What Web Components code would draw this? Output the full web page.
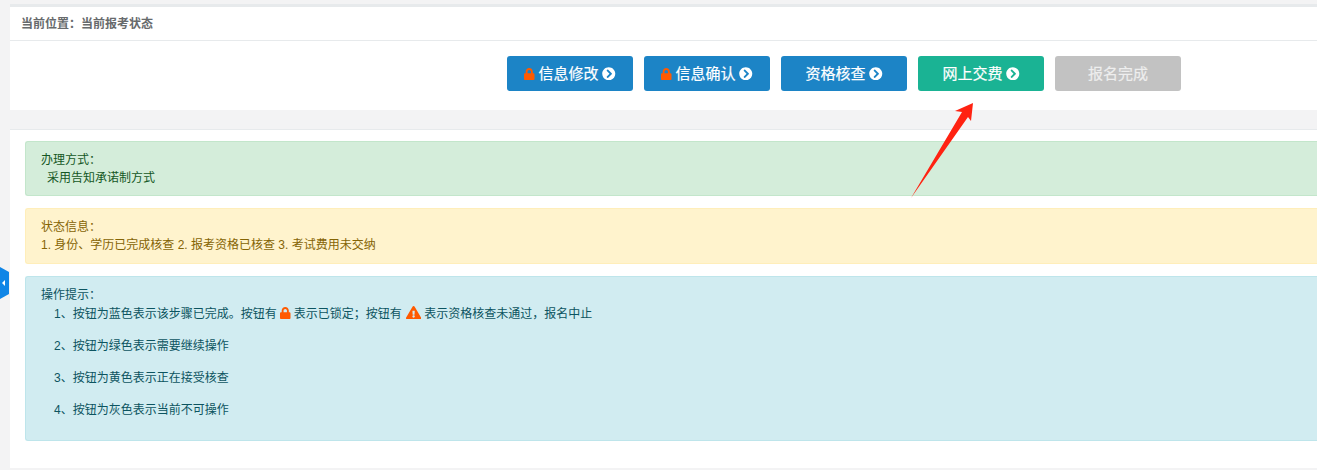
<!DOCTYPE html>
<html lang="zh">
<head>
<meta charset="utf-8">
<title>当前报考状态</title>
<style>
    html, body { margin: 0; height: 470px; overflow: hidden; background: #f3f3f4; }
    body {
        font-family: "Liberation Sans", "Noto Sans CJK SC", sans-serif;
        font-size: 12px;
        color: #676a6c;
    }
</style>
</head>
<body>
<app-page>
    <app-step-bar slot="steps">
        <app-step color="blue" locked>信息修改</app-step>
        <app-step color="blue" locked>信息确认</app-step>
        <app-step color="blue">资格核查</app-step>
        <app-step color="green">网上交费</app-step>
        <app-step color="grey">报名完成</app-step>
    </app-step-bar>

    <app-alert kind="success" style="padding-bottom:8px">
        <div>办理方式：</div>
        <div style="padding-left:6px">采用告知承诺制方式</div>
    </app-alert>
    <app-alert kind="warning">
        <div>状态信息：</div>
        <div>1. 身份、学历已完成核查 2. 报考资格已核查 3. 考试费用未交纳</div>
    </app-alert>
    <app-alert kind="info">
        <div>操作提示：</div>
        <app-tip first>1、按钮为蓝色表示该步骤已完成。按钮有 <app-icon name="lock" style="font-size:12px;color:#ff5a00"></app-icon> 表示已锁定；按钮有 <app-icon name="warn" style="font-size:13.5px;margin-left:.5px;color:#ff5a00"></app-icon> 表示资格核查未通过，报名中止</app-tip>
        <app-tip>2、按钮为绿色表示需要继续操作</app-tip>
        <app-tip>3、按钮为黄色表示正在接受核查</app-tip>
        <app-tip>4、按钮为灰色表示当前不可操作</app-tip>
    </app-alert>
</app-page>

<script>
const ICONS = {
    lock: ['0 0 448 512', 'M400 224h-24v-72C376 68.2 307.8 0 224 0S72 68.2 72 152v72H48c-26.5 0-48 21.5-48 48v192c0 26.5 21.5 48 48 48h352c26.5 0 48-21.5 48-48V272c0-26.5-21.5-48-48-48zm-104 0H152v-72c0-39.7 32.3-72 72-72s72 32.3 72 72v72z'],
    warn: ['0 0 576 512', 'M569.517 440.013C587.975 472.007 564.806 512 527.94 512H48.054c-36.937 0-59.999-40.055-41.577-71.987L246.423 23.985c18.467-32.009 64.72-31.951 83.154 0l239.94 416.028zM288 354c-25.405 0-46 20.595-46 46s20.595 46 46 46 46-20.595 46-46-20.595-46-46-46zm-43.673-165.346l7.418 136c.347 6.364 5.609 11.346 11.982 11.346h48.546c6.373 0 11.635-4.982 11.982-11.346l7.418-136c.375-6.874-5.098-12.654-11.982-12.654h-63.383c-6.884 0-12.356 5.78-11.981 12.654z'],
    next: ['0 0 512 512', 'M256 8c137 0 248 111 248 248S393 504 256 504 8 393 8 256 119 8 256 8zm113.9 231L234.4 103.5c-9.4-9.4-24.6-9.4-33.9 0l-17 17c-9.4 9.4-9.4 24.6 0 33.9L285.1 256 183.5 357.6c-9.4 9.4-9.4 24.6 0 33.9l17 17c9.4 9.4 24.6 9.4 33.9 0L369.9 273c9.4-9.4 9.4-24.6 0-34z']
};

class AppIcon extends HTMLElement {
    constructor() {
        super();
        const [box, d] = ICONS[this.getAttribute('name')];
        this.attachShadow({mode: 'open'}).innerHTML = `
            <style>
                :host { display: inline-block; height: 1em; line-height: 0; vertical-align: -1px; }
                svg { height: 1em; width: auto; fill: currentColor; display: block; }
            </style>
            <svg viewBox="${box}"><path d="${d}"/></svg>`;
    }
}
customElements.define('app-icon', AppIcon);

const templatePage = document.createElement('template');
templatePage.innerHTML = `
    <style>
        :host { display: block; box-sizing: border-box; width: 100%; padding: 4px 0 0 10px; }
        .panel { background: #fff; }
        .title {
            border-top: 3px solid #e7eaec;
            border-bottom: 1px solid #e7eaec;
            height: 33px;
            line-height: 35px;
            padding-left: 11px;
            font-weight: bold;
            color: #676a6c;
        }
        .steps { height: 69px; }
        .body {
            margin-top: 19px;
            border-top: 1px solid #e7eaec;
            padding: 11px 0 27px 15px;
            display: flex;
            flex-direction: column;
            gap: 12px;
        }
        .side-tab {
            position: absolute;
            left: 0;
            top: 267px;
            width: 9px;
            height: 32px;
            background: #0f85e6;
            clip-path: polygon(0 0, 100% 5px, 100% 27px, 0 100%);
        }
        .side-tab::after {
            content: "";
            position: absolute;
            left: 2px;
            top: 13px;
            border: 3px solid transparent;
            border-left-width: 0;
            border-right-color: #fff;
        }
        .arrow { position: absolute; left: 0; top: 0; pointer-events: none; }
    </style>
    <div class="panel">
        <div class="title">当前位置：当前报考状态</div>
        <div class="steps"><slot name="steps"></slot></div>
    </div>
    <div class="panel body"><slot></slot></div>
    <div class="side-tab"></div>
    <svg class="arrow" width="1317" height="470">
        <polygon fill="#ff2211" points="973,103 971,121 968,117 911,198 962,112 955,111"/>
    </svg>
`;

class AppPage extends HTMLElement {
    constructor() {
        super();
        this.attachShadow({mode: 'open'}).appendChild(templatePage.content.cloneNode(true));
    }
}
customElements.define('app-page', AppPage);

class AppStepBar extends HTMLElement {
    constructor() {
        super();
        this.attachShadow({mode: 'open'}).innerHTML = `
            <style>
                :host { display: flex; gap: 11px; padding: 15px 0 0 497px; }
            </style>
            <slot></slot>`;
    }
}
customElements.define('app-step-bar', AppStepBar);

const STEP_COLORS = { blue: '#1c84c6', green: '#1ab394', grey: '#c2c2c2' };

class AppStep extends HTMLElement {
    constructor() {
        super();
        const color = this.getAttribute('color');
        const lock = this.hasAttribute('locked')
            ? '<app-icon class="lock" name="lock"></app-icon>' : '';
        const next = color === 'grey' ? '' : '<app-icon class="next" name="next"></app-icon>';
        this.attachShadow({mode: 'open'}).innerHTML = `
            <style>
                :host {
                    display: flex;
                    align-items: center;
                    justify-content: center;
                    width: 126px;
                    height: 35px;
                    border-radius: 3px;
                    background: ${STEP_COLORS[color]};
                    color: #fff;
                    font-size: 15px;
                    line-height: 35px;
                    -webkit-text-stroke: 0.2px #fff;
                }
                .lock { font-size: 12px; width: 10px; color: #ff5a00; margin-right: 4px; -webkit-text-stroke: 0; }
                .next { font-size: 13.5px; margin-left: 3.5px; }
                ${color === 'grey' ? ':host { color: #eee; -webkit-text-stroke: 0.2px #eee; }' : ''}
            </style>
            ${lock}<slot></slot>${next}`;
    }
}
customElements.define('app-step', AppStep);

const ALERT_KINDS = {
    success: ['#d4edda', '#c3e6cb', '#155724'],
    warning: ['#fff3cd', '#ffeeba', '#856404'],
    info: ['#d1ecf1', '#bee5eb', '#0c5460']
};

class AppAlert extends HTMLElement {
    constructor() {
        super();
        const [bg, line, ink] = ALERT_KINDS[this.getAttribute('kind')];
        this.attachShadow({mode: 'open'}).innerHTML = `
            <style>
                :host {
                    display: block;
                    box-sizing: border-box;
                    padding: 9px 15px 9px;
                    background: ${bg};
                    border: 1px solid ${line};
                    border-right: 0;
                    border-radius: 3px 0 0 3px;
                    color: ${ink};
                    line-height: 18px;
                }
            </style>
            <slot></slot>`;
    }
}
customElements.define('app-alert', AppAlert);

class AppTip extends HTMLElement {
    constructor() {
        super();
        this.attachShadow({mode: 'open'}).innerHTML = `
            <style>
                :host { display: block; padding-left: 13px; margin-top: 14px; }
                :host([first]) { margin-top: 1px; }
                :host(:last-child) { margin-bottom: 12px; }
            </style>
            <slot></slot>`;
    }
}
customElements.define('app-tip', AppTip);
</script>
</body>
</html>
